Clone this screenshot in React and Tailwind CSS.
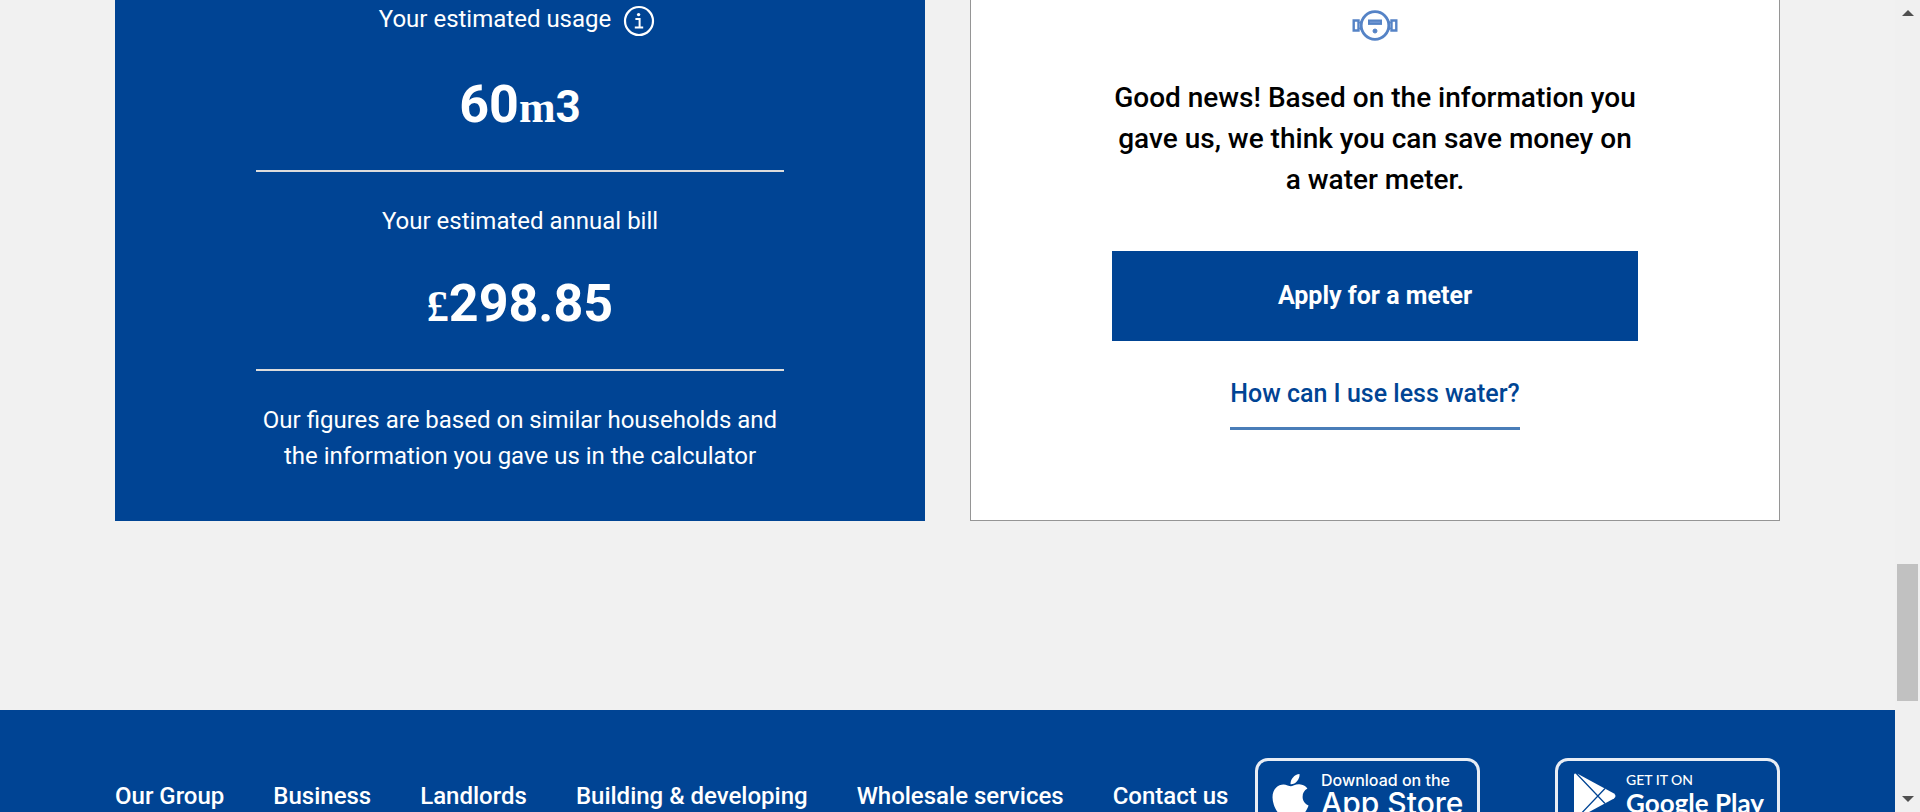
import { FaApple } from "react-icons/fa";

const footerLinks = [
  "Our Group",
  "Business",
  "Landlords",
  "Building & developing",
  "Wholesale services",
  "Contact us",
];

function InfoIcon() {
  return (
    <svg viewBox="0 0 32 32" className="size-8" fill="none" aria-hidden="true">
      <circle cx="16" cy="16" r="14" stroke="white" strokeWidth="2.2" />
      <circle cx="15.6" cy="9.6" r="1.7" fill="white" />
      <path d="M12.4 14h4.2v8.2M11.8 22.4h8.4" stroke="white" strokeWidth="2" />
    </svg>
  );
}

function MeterIcon() {
  return (
    <svg viewBox="0 0 46 32" className="h-8 w-[46px]" fill="none" stroke="#5583c6" aria-hidden="true">
      <circle cx="23" cy="16.5" r="13.8" strokeWidth="2.8" />
      <path d="M1.7 11.500h4.800v10H1.700zM39.500 11.500h4.800v10h-4.800z" strokeWidth="2.400" />
      <path d="M7.4 14.1 9.4 12.9M7.4 18.900l2 1.2M38.6 14.1l-2-1.2M38.6 18.9l-2 1.2" strokeWidth="2" />
      <rect x="17" y="11.5" width="12" height="3.4" fill="#7297d3" strokeWidth="2" />
      <circle cx="23" cy="22" r="2" fill="#5583c6" strokeWidth="1" />
    </svg>
  );
}

function PlayIcon() {
  return (
    <svg viewBox="0 0 42 46" className="h-[46px] w-[42px] shrink-0" aria-hidden="true">
      <path d="M1 0.500 Q0 0.500 0 2v42q0 1.500 1 1.500L4 45 40 25.500q3-2.500 0-5L4 1z" fill="white" />
      <path d="M2 0 31 30.500M2 46 31 15.500" stroke="#004494" strokeWidth="1.300" fill="none" />
    </svg>
  );
}

function Figure({ children }) {
  return <p className="mt-[33px] text-[52px] leading-[64px] font-bold">{children}</p>;
}

function Rule() {
  return <hr className="mt-[33px] mb-[31px] w-full border-t-2 border-[#dcdcdc]" />;
}

function UsageCard() {
  return (
    <section className="flex flex-col items-center bg-[#004494] px-[141px] pt-px pb-[47px] text-center text-2xl leading-9 text-white">
      <div className="flex h-[39px] items-start gap-3 pr-1.5">
        <span>Your estimated usage</span>
        <button type="button" aria-label="About your estimated usage" className="mt-1">
          <InfoIcon />
        </button>
      </div>
      <Figure>
        60<span className="font-['Liberation_Serif',serif] text-[44px] leading-none">m</span>
        <span className="text-[44px] leading-none">3</span>
      </Figure>
      <Rule />
      <p>Your estimated annual bill</p>
      <Figure>
        <span className="font-['Liberation_Serif',serif] text-[44px] leading-none">£</span>298.85
      </Figure>
      <Rule />
      <p>Our figures are based on similar households and the information you gave us in the calculator</p>
    </section>
  );
}

function MeterCard() {
  return (
    <section className="flex flex-col items-center border border-t-0 border-[#959595] bg-white px-[141px] pt-[9px] text-center text-[25px] leading-9">
      <MeterIcon />
      <p className="mt-9 text-[28px] leading-[41px] font-medium text-black">
        Good news! Based on the information you gave us, we think you can save money on a water meter.
      </p>
      <button type="button" className="mt-[51px] h-[90px] w-full bg-[#004494] font-bold text-white">
        Apply for a meter
      </button>
      <a href="#less-water" className="mt-[35px] border-b-3 border-[#497db8] pb-[15px] font-medium text-[#004494]">
        How can I use less water?
      </a>
    </section>
  );
}

function StoreBadge({ href, children }) {
  return (
    <a href={href} className="flex h-[75px] w-[225px] shrink-0 items-center rounded-[13px] border-3 border-[#e8edf5] text-white">
      {children}
    </a>
  );
}

function Footer() {
  return (
    <footer className="flex items-center justify-between bg-[#004494] px-[115px] py-12 text-2xl leading-9 font-medium text-white">
      <nav className="flex gap-[49px] whitespace-nowrap">
        {footerLinks.map((label) => (
          <a key={label} href="#footer">{label}</a>
        ))}
      </nav>
      <div className="flex gap-[75px]">
        <StoreBadge href="#app-store">
          <FaApple className="ml-[14px] h-[49px] w-[37px] shrink-0" />
          <span className="ml-3 flex flex-col pb-0.5 whitespace-nowrap font-['Inter',sans-serif]">
            <span className="text-base leading-4">Download on the</span>
            <span className="text-3xl leading-[30px]">App Store</span>
          </span>
        </StoreBadge>
        <StoreBadge href="#google-play">
          <span className="ml-4">
            <PlayIcon />
          </span>
          <span className="ml-[10px] flex flex-col pb-0.5 whitespace-nowrap font-['Lato',sans-serif]">
            <span className="text-sm leading-4">GET IT ON</span>
            <span className="text-[26px] leading-[30px] font-bold">Google Play</span>
          </span>
        </StoreBadge>
      </div>
    </footer>
  );
}

function ScrollBar() {
  return (
    <div className="flex w-[25px] shrink-0 flex-col items-center bg-[#f0f0f0] py-[10px]" aria-hidden="true">
      <svg viewBox="0 0 12 6" className="h-[6px] w-3" fill="#505050">
        <path d="M6 0 12 6H0z" />
      </svg>
      <div className="flex w-full grow flex-col items-center">
        <div className="grow-[548]" />
        <div className="w-[21px] grow-[137] bg-[#c1c1c1]" />
        <div className="grow-[95]" />
      </div>
      <svg viewBox="0 0 12 6" className="h-[6px] w-3" fill="#505050">
        <path d="M0 0h12L6 6z" />
      </svg>
    </div>
  );
}

export default function App() {
  return (
    <div className="flex h-screen overflow-hidden bg-[#f1f1f1] font-['Roboto',sans-serif]">
      <div className="min-w-0 grow overflow-hidden">
        <main className="grid grid-cols-2 gap-[45px] px-[115px] pb-[189px]">
          <UsageCard />
          <MeterCard />
        </main>
        <Footer />
      </div>
      <ScrollBar />
    </div>
  );
}
